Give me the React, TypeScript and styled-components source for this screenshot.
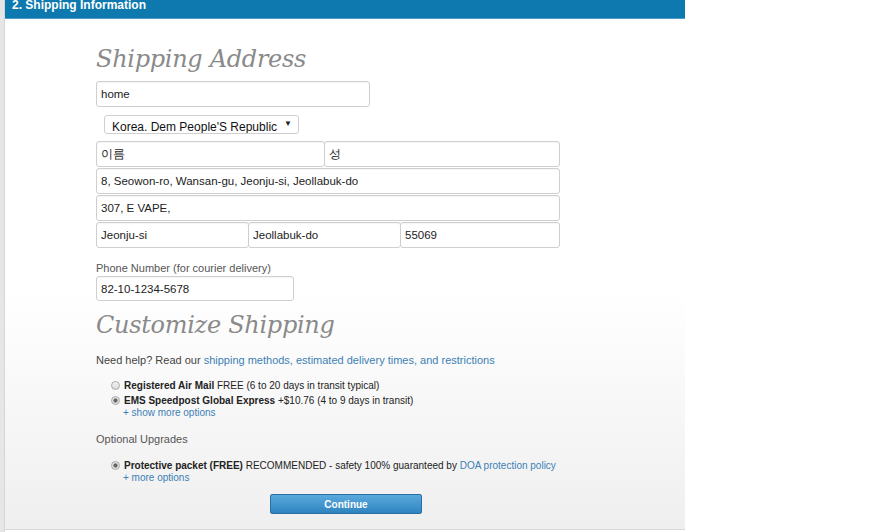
import styled, { createGlobalStyle } from 'styled-components'

const Global = createGlobalStyle`
  html, body {
    margin: 0;
    padding: 0;
    background: #fff;
  }
  body {
    font-family: "Liberation Sans", Arial, sans-serif;
    font-size: 11px;
    color: #333;
  }
`

const Page = styled.div`
  display: flex;
  width: 875px;
  height: 532px;
  overflow: hidden;
`

const Rail = styled.div`
  width: 4px;
  background: #e6e6e6;
  border-right: 1px solid #d6d6d6;
`

const Panel = styled.div`
  width: 680px;
  height: 529px;
  display: flex;
  flex-direction: column;
  background: linear-gradient(#ffffff 0%, #ffffff 55%, #efefef 100%);
  border-bottom: 1px solid #d8d8d8;
`

const Header = styled.div`
  height: 18px;
  background: #0e79af;
  border-bottom: 1px solid #4a9ccb;
  color: #fff;
  font-weight: bold;
  font-size: 12px;
  line-height: 11px;
  padding-left: 7px;
`

const Body = styled.div`
  padding: 24px 0 0 91px;
  display: flex;
  flex-direction: column;
`

const Title = styled.h2<{ $top?: number }>`
  margin: ${p => p.$top ?? 0}px 0 0 0;
  font-family: "DejaVu Serif", Georgia, serif;
  font-style: italic;
  font-weight: normal;
  font-size: 24px;
  line-height: 32px;
  color: #8a8a8a;
  letter-spacing: -0.3px;
`

const Field = styled.div<{ $w?: number; $h?: number }>`
  box-sizing: border-box;
  width: ${p => (p.$w ? `${p.$w}px` : 'auto')};
  height: ${p => p.$h ?? 26}px;
  border: 1px solid #cfcfcf;
  border-radius: 3px;
  background: #fff;
  padding-left: 4px;
  display: flex;
  align-items: center;
  font-size: 11.5px;
  color: #222;
  flex: ${p => (p.$w ? '0 0 auto' : '1 1 0')};
  box-shadow: inset 0 1px 1px rgba(0, 0, 0, 0.04);
  & + & {
    margin-left: -1px;
  }
`

const FieldRow = styled.div`
  display: flex;
  width: 464px;
  margin-top: 1px;
`

const Select = styled.div`
  box-sizing: border-box;
  margin: 8px 0 7px 8px;
  width: 195px;
  height: 19px;
  border: 1px solid #cfcfcf;
  border-radius: 3px;
  background: #fff;
  display: flex;
  align-items: flex-start;
  justify-content: space-between;
  padding: 0 6px 0 7px;
  overflow: hidden;
  white-space: nowrap;
  font-size: 12px;
  line-height: 22px;
  color: #111;
`

const Caret = styled.span`
  font-size: 8px;
  line-height: 16px;
  color: #222;
`

const Label = styled.div<{ $top: number }>`
  margin-top: ${p => p.$top}px;
  font-size: 11px;
  color: #555;
  line-height: 13px;
`

const Help = styled.div`
  margin-top: 12px;
  font-size: 11px;
  color: #444;
  line-height: 14px;
`

const Link = styled.a`
  color: #3c7fb5;
  text-decoration: none;
`

const Options = styled.div<{ $top: number }>`
  margin: ${p => p.$top}px 0 0 15px;
  display: flex;
  flex-direction: column;
`

const OptionRow = styled.div`
  display: flex;
  align-items: center;
  height: 15px;
  font-size: 10px;
  color: #222;
  gap: 4px;
`

const Radio = styled.span<{ $on?: boolean }>`
  box-sizing: border-box;
  width: 9px;
  height: 9px;
  border-radius: 50%;
  border: 1px solid #a9a9a9;
  background: ${p =>
    p.$on
      ? 'radial-gradient(circle, #666 0 1.8px, #e2e2e2 2.4px)'
      : 'linear-gradient(#f4f4f4, #d8d8d8)'};
`

const More = styled.a`
  color: #3c7fb5;
  font-size: 10px;
  line-height: 10px;
  padding-left: 12px;
  text-decoration: none;
`

const ButtonRow = styled.div`
  width: 500px;
  display: flex;
  justify-content: center;
  margin-top: 11px;
`

const Button = styled.button`
  width: 152px;
  height: 20px;
  border: 1px solid #2a70a3;
  border-radius: 2px;
  background: linear-gradient(#5aa9dc, #2f84c0);
  color: #fff;
  font-family: "Liberation Sans", Arial, sans-serif;
  font-weight: bold;
  font-size: 10px;
  padding: 0;
`

export default function App() {
  return (
    <Page>
      <Global />
      <Rail />
      <Panel>
        <Header>2. Shipping Information</Header>
        <Body>
          <Title>Shipping Address</Title>
          <Field $w={274} $h={26} style={{ marginTop: 6 }}>home</Field>
          <Select>
            <span>Korea. Dem People'S Republic</span>
            <Caret>▼</Caret>
          </Select>
          <FieldRow style={{ marginTop: 0 }}>
            <Field $w={229}>이름</Field>
            <Field>성</Field>
          </FieldRow>
          <FieldRow>
            <Field>8, Seowon-ro, Wansan-gu, Jeonju-si, Jeollabuk-do</Field>
          </FieldRow>
          <FieldRow>
            <Field>307, E VAPE,</Field>
          </FieldRow>
          <FieldRow>
            <Field $w={153}>Jeonju-si</Field>
            <Field $w={153}>Jeollabuk-do</Field>
            <Field>55069</Field>
          </FieldRow>
          <Label $top={14}>Phone Number (for courier delivery)</Label>
          <Field $w={198} $h={25} style={{ marginTop: 1 }}>82-10-1234-5678</Field>
          <Title $top={8}>Customize Shipping</Title>
          <Help>
            Need help? Read our{' '}
            <Link>shipping methods, estimated delivery times, and restrictions</Link>
          </Help>
          <Options $top={11}>
            <OptionRow>
              <Radio />
              <span>
                <b>Registered Air Mail</b> FREE (6 to 20 days in transit typical)
              </span>
            </OptionRow>
            <OptionRow>
              <Radio $on />
              <span>
                <b>EMS Speedpost Global Express</b> +$10.76 (4 to 9 days in transit)
              </span>
            </OptionRow>
            <More>+ show more options</More>
          </Options>
          <Label $top={15}>Optional Upgrades</Label>
          <Options $top={12}>
            <OptionRow>
              <Radio $on />
              <span>
                <b>Protective packet (FREE)</b> RECOMMENDED - safety 100% guaranteed by{' '}
                <Link>DOA protection policy</Link>
              </span>
            </OptionRow>
            <More>+ more options</More>
          </Options>
          <ButtonRow>
            <Button>Continue</Button>
          </ButtonRow>
        </Body>
      </Panel>
    </Page>
  )
}
